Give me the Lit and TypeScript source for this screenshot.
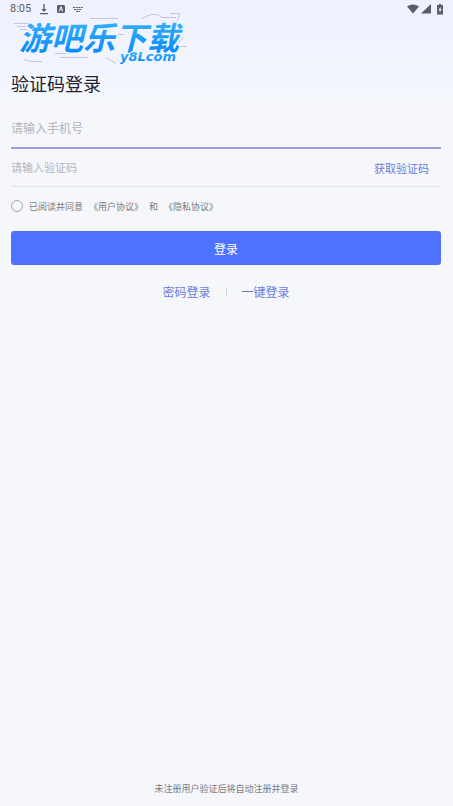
import { LitElement, html, css } from "lit";
import { customElement, state } from "lit/decorators.js";

@customElement("status-bar")
class StatusBar extends LitElement {
  static styles = css`
    :host {
      display: flex;
      align-items: center;
      justify-content: space-between;
      height: 18px;
      padding: 0 10px;
      color: #5c5d66;
      font: 11px/18px Roboto, sans-serif;
    }
    .group {
      display: flex;
      align-items: center;
    }
    .left {
      gap: 8px;
    }
    .right {
      gap: 2px;
    }
    svg {
      display: block;
      fill: currentColor;
    }
    .battery {
      margin-left: 4px;
    }
  `;
  render() {
    return html`
      <div class="group left">
        <span>8:05</span>
        <svg width="10" height="12" viewBox="0 0 10 12">
          <path d="M4.3 1h1.4v5h2L5 9 2.300 6h2zM1 10h8v1.200H1z" />
        </svg>
        <svg width="8" height="10" viewBox="0 0 8 10">
          <path
            fill-rule="evenodd"
            d="M1 1h6l1 1v6l-1 1H1L0 8V2zM3.400 2.500 1.700 7.500h1l.4-1.200h1.800l.4 1.200h1L4.600 2.500zM4 3.800l.6 1.700H3.400z"
          />
        </svg>
        <svg width="10" height="8" viewBox="0 0 10 8">
          <path
            fill="none"
            stroke="currentColor"
            d="M0 2.500h10M1 4.500h8M3 6.500h4"
            stroke-dasharray="2 .6"
          />
        </svg>
      </div>
      <div class="group right">
        <svg width="12" height="10" viewBox="0 0 12 10">
          <path d="M0 2.500Q6-1.500 12 2.500L6 9.500z" />
        </svg>
        <svg width="10" height="10" viewBox="0 0 10 10">
          <path d="M10 0v9.500H0z" />
        </svg>
        <svg class="battery" width="6" height="11" viewBox="0 0 6 11">
          <path fill-rule="evenodd" d="M2 0h2v1h2v9.500H0V1h2zM3.500 2.800 1.500 6.200h1.200v2.300l2-3.400H3.500z" />
        </svg>
      </div>
    `;
  }
}

@customElement("brand-logo")
class BrandLogo extends LitElement {
  static styles = css`
    :host {
      display: block;
      width: 190px;
    }
    svg {
      display: block;
      width: 100%;
      overflow: visible;
    }
    .name {
      font: italic 700 32px "Noto Sans CJK SC", sans-serif;
    }
    .site {
      font: italic 700 13px "DejaVu Sans", sans-serif;
    }
    .halo {
      stroke: #f5f7ff;
      stroke-width: 2px;
      stroke-linejoin: round;
      paint-order: stroke;
    }
    .trace {
      fill: none;
      stroke: #c3c6e2;
      stroke-width: 1px;
    }
  `;
  render() {
    return html`
      <svg viewBox="0 0 190 50" role="img" aria-label="游吧乐下载 y8Lcom">
        <defs>
          <linearGradient id="blue" x1="0" y1="0" x2="0" y2="1">
            <stop offset="0.2" stop-color="#36b0fb" />
            <stop offset="0.9" stop-color="#0788fa" />
          </linearGradient>
        </defs>
        <path
          class="trace"
          d="M14 5.500h14M17 8.500h9M20 11.500h7M90 .5h28M141 .5l10-4h6l5 3h14M55 35.500h12M60 39.500h28M24 41.500l8 2h10M106 39.500l10 6M176 27l8-8M179 28.500h8M170-4.500h10l-3 8M118 16.500h6"
        />
        <text class="name halo" x="19" y="32" fill="url(#blue)">游吧乐下载</text>
        <text class="site halo" x="120" y="43" fill="url(#blue)">y8Lcom</text>
      </svg>
    `;
  }
}

@customElement("app-root")
class AppRoot extends LitElement {
  @state() private agreed = false;

  static styles = css`
    :host {
      display: flex;
      flex-direction: column;
      min-height: 100vh;
      background: linear-gradient(#eff2fe, #f2f5fe 70px, #f5f7fb 110px);
      color: #22252e;
      font-family: "Noto Sans CJK SC", sans-serif;
    }
    * {
      box-sizing: border-box;
    }
    form {
      display: flex;
      flex-direction: column;
      padding: 0 12px 0 11px;
    }
    h1 {
      margin: 0 0 11px;
      font-size: 18px;
      line-height: 30px;
      font-weight: 400;
    }
    .field {
      display: flex;
      align-items: center;
      height: 38px;
      border-bottom: 1px solid #e1e3ea;
    }
    .field.active {
      height: 40px;
      border-bottom: 2px solid #9a9fdc;
    }
    input,
    button {
      font-family: inherit;
    }
    .text {
      flex: 1;
      min-width: 0;
      height: 24px;
      padding: 0 0 2px;
      border: 0;
      outline: 0;
      background: none;
      color: inherit;
      font-size: 11px;
    }
    .active .text {
      font-size: 12px;
    }
    .text::placeholder {
      color: #b3b5bc;
      opacity: 1;
    }
    .link {
      padding: 0;
      border: 0;
      background: none;
      color: #6b7be0;
      font-size: 12px;
      line-height: 20px;
      text-decoration: none;
    }
    .code {
      padding-right: 12px;
      font-size: 11px;
    }
    .consent {
      display: flex;
      align-items: center;
      height: 38px;
      color: #797b82;
      font-size: 9px;
    }
    .consent a {
      color: inherit;
      text-decoration: none;
    }
    .consent label {
      display: flex;
      align-items: center;
      gap: 6px;
      margin-right: 6px;
    }
    .tick {
      appearance: none;
      width: 12px;
      height: 12px;
      margin: 0;
      border: 1px solid #a4a6ad;
      border-radius: 50%;
    }
    .tick:checked {
      background: #4d72ff;
    }
    .and {
      margin: 0 6px;
    }
    .submit {
      height: 34px;
      margin-top: 6px;
      padding: 0;
      border: 0;
      border-radius: 3px;
      background: #4d72ff;
      color: #fff;
      font-size: 12px;
    }
    .other {
      display: flex;
      align-items: center;
      justify-content: center;
      gap: 15px;
      margin-top: 17px;
    }
    .rule {
      width: 1px;
      height: 10px;
      background: #d0d2dc;
    }
    footer {
      margin-top: auto;
      padding-bottom: 10px;
      text-align: center;
      color: #797b82;
      font-size: 9px;
      line-height: 14px;
    }
  `;

  render() {
    return html`
      <status-bar></status-bar>
      <brand-logo></brand-logo>
      <form @submit=${(e: Event) => e.preventDefault()}>
        <h1>验证码登录</h1>
        <div class="field active">
          <input class="text" type="tel" placeholder="请输入手机号" aria-label="手机号" />
        </div>
        <div class="field">
          <input class="text" placeholder="请输入验证码" aria-label="验证码" />
          <button class="link code" type="button">获取验证码</button>
        </div>
        <div class="consent">
          <label>
            <input
              class="tick"
              type="checkbox"
              .checked=${this.agreed}
              @change=${() => (this.agreed = !this.agreed)}
            />
            已阅读并同意
          </label>
          <a href="#terms">《用户协议》</a>
          <span class="and">和</span>
          <a href="#privacy">《隐私协议》</a>
        </div>
        <button class="submit" type="submit">登录</button>
        <nav class="other">
          <a class="link" href="#password">密码登录</a>
          <span class="rule"></span>
          <a class="link" href="#quick">一键登录</a>
        </nav>
      </form>
      <footer>未注册用户验证后将自动注册并登录</footer>
    `;
  }
}
